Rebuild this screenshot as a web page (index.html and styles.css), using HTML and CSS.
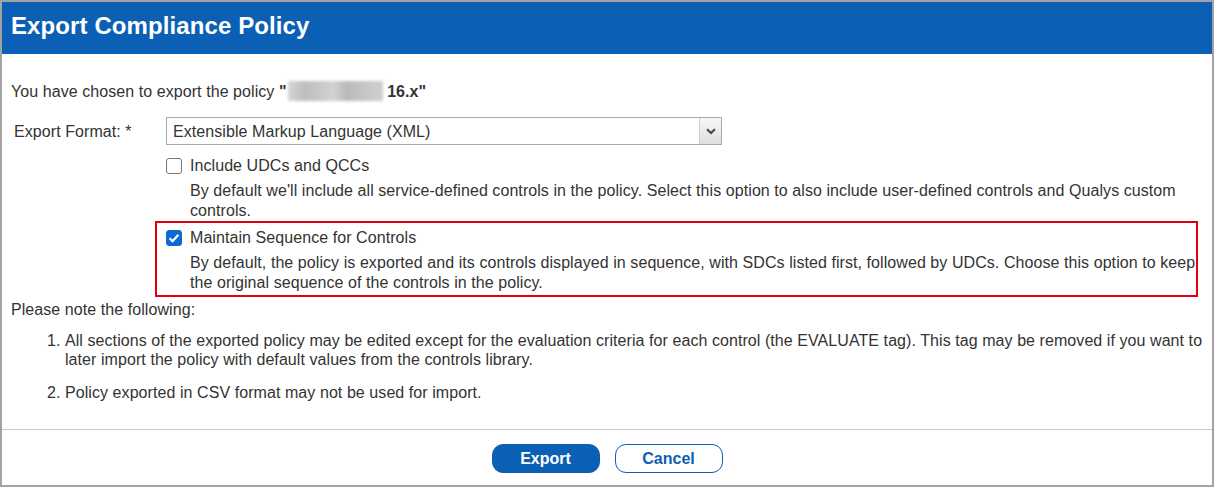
FILE: index.html
```html
<!DOCTYPE html>
<html lang="en">
<head>
<meta charset="utf-8">
<title>Export Compliance Policy</title>
<link rel="stylesheet" href="styles.css">
</head>
<body>
<div class="dialog">
  <div class="header">Export Compliance Policy</div>
  <div class="content">
    <p class="intro">You have chosen to export the policy <b>"</b><span class="blur"></span> <b>16.x"</b></p>
    <div class="form-row">
      <span class="form-label">Export Format: *</span>
      <div class="select">
        <span class="select-text">Extensible Markup Language (XML)</span>
        <span class="select-arrow"><svg width="10" height="7" viewBox="0 0 10 7"><path d="M1 1.2 L5 5 L9 1.2" fill="none" stroke="#4a4a4a" stroke-width="2.2"/></svg></span>
      </div>
    </div>
    <div class="option">
      <div class="option-label"><span class="checkbox"></span>Include UDCs and QCCs</div>
      <div class="option-desc">By default we'll include all service-defined controls in the policy. Select this option to also include user-defined controls and Qualys custom controls.</div>
    </div>
    <div class="option highlight">
      <div class="option-label"><span class="checkbox checked"><svg width="16" height="16" viewBox="0 0 16 16"><path d="M3.6 8.2 L6.6 11.2 L12.4 4.8" fill="none" stroke="#fff" stroke-width="2.3"/></svg></span>Maintain Sequence for Controls</div>
      <div class="option-desc">By default, the policy is exported and its controls displayed in sequence, with SDCs listed first, followed by UDCs. Choose this option to keep the original sequence of the controls in the policy.</div>
    </div>
    <p class="note">Please note the following:</p>
    <ol class="notes">
      <li>All sections of the exported policy may be edited except for the evaluation criteria for each control (the EVALUATE tag). This tag may be removed if you want to later import the policy with default values from the controls library.</li>
      <li>Policy exported in CSV format may not be used for import.</li>
    </ol>
  </div>
  <div class="footer">
    <button class="btn btn-primary">Export</button>
    <button class="btn btn-secondary">Cancel</button>
  </div>
</div>
</body>
</html>
```
FILE: styles.css
```css
* { box-sizing: border-box; }
html, body { margin: 0; padding: 0; background: #fff; }
body {
  font-family: "Liberation Sans", Arial, sans-serif;
  font-size: 16px;
  color: #333;
  letter-spacing: 0.07px;
}
.dialog {
  width: 1214px;
  height: 487px;
  border: 2px solid #a3a3a3;
  display: flex;
  flex-direction: column;
  overflow: hidden;
}
.header {
  height: 52px;
  flex: none;
  background: #0b5fb4;
  color: #fff;
  font-weight: bold;
  font-size: 24px;
  letter-spacing: 0.1px;
  line-height: 48px;
  padding: 0 0 4px 9px;
}
.content {
  flex: 1;
  padding: 28px 7px 0 9px;
  line-height: 20px;
}
.intro { margin: 0; height: 20px; }
.blur {
  display: inline-block;
  vertical-align: top;
  width: 95px;
  height: 20px;
  margin-left: 1px;
  margin-top: -1px;
  background: linear-gradient(90deg, #d6d6d6 0%, #bdbdbd 18%, #c9c9c9 35%, #d2d2d2 48%, #b9b9b9 62%, #c4c4c4 78%, #cfcfcf 100%);
  filter: blur(1.5px);
}
.form-row {
  display: flex;
  align-items: center;
  margin-top: 15px;
  padding-left: 3px;
  height: 28px;
}
.form-label { width: 152px; flex: none; padding-top: 2px; }
.select {
  width: 556px;
  height: 28px;
  border: 1px solid #aaa;
  display: flex;
  align-items: center;
  background: #fff;
}
.select-text { flex: 1; padding-left: 6px; padding-top: 2px; }
.select-arrow {
  width: 22px;
  height: 26px;
  border-left: 1px solid #cfcfcf;
  background: linear-gradient(#f7f7f7, #dedede);
  display: flex;
  align-items: center;
  justify-content: center;
}
.option {
  margin: 3px 7px 0 144px;
  border: 2px solid transparent;
  padding: 6px 0 0 9px;
}
.option.highlight {
  border-color: #e0000f;
  margin-top: -2px;
  padding-top: 5px;
  padding-bottom: 2px;
}
.option-label { display: flex; align-items: center; height: 20px; }
.checkbox {
  width: 16px;
  height: 16px;
  border: 1px solid #767676;
  border-radius: 3px;
  margin-right: 8px;
  background: #fff;
  flex: none;
  display: flex;
}
.checkbox.checked { background: #0b6bd3; border-color: #0b6bd3; }
.checkbox.checked svg { margin: -1px; }
.option-desc { margin: 5px 0 0 24px; }
.note { margin: 3px 0 0; }
.notes {
  margin: 11px 0 0;
  padding-left: 54px;
  line-height: 19px;
}
.notes li + li { margin-top: 14px; }
.footer {
  height: 56px;
  flex: none;
  border-top: 1px solid #c8c8c8;
  display: flex;
  align-items: flex-start;
  justify-content: center;
  gap: 15px;
  padding-top: 14px;
}
.btn {
  width: 108px;
  height: 29px;
  border-radius: 11px;
  font-family: "Liberation Sans", Arial, sans-serif;
  font-weight: bold;
  font-size: 16px;
  padding: 0;
  cursor: pointer;
}
.btn-primary { background: #0b5fb4; border: 1px solid #0b5fb4; color: #fff; }
.btn-secondary { background: #fff; border: 1px solid #0b5fb4; color: #0b5fb4; }
```
